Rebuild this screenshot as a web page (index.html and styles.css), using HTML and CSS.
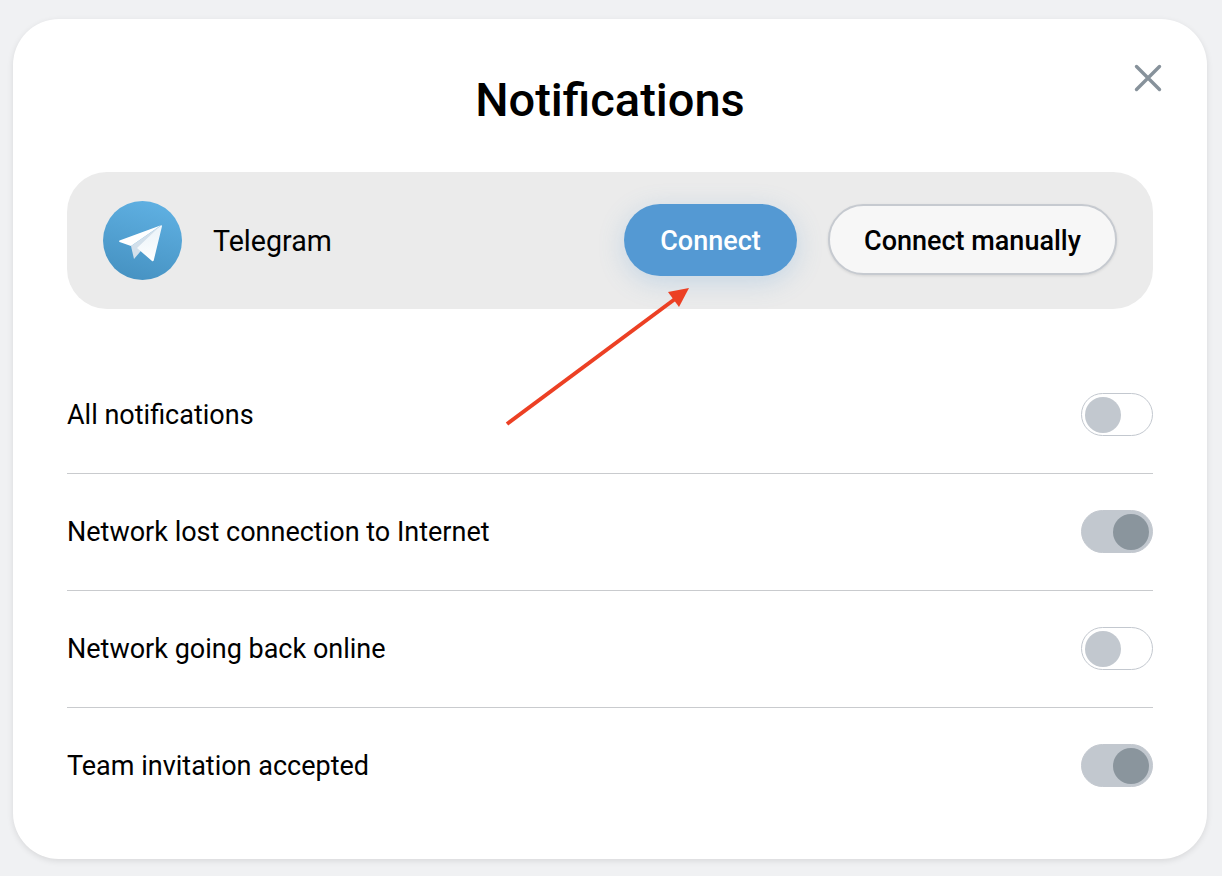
FILE: index.html
```html
<!DOCTYPE html>
<html lang="en">
<head>
    <meta charset="UTF-8">
    <meta name="viewport" content="width=device-width, initial-scale=1.0">
    <title>Notifications</title>
    <link rel="stylesheet" href="styles.css">
</head>
<body>
    <div class="modal">
        <button class="close" aria-label="Close">
            <svg width="28" height="28" viewBox="0 0 28 28"><path d="M2.500 2.500L25.500 25.500M25.500 2.500L2.500 25.500" stroke="#87929b" stroke-width="3.4" stroke-linecap="round" fill="none"/></svg>
        </button>
        <h1 class="title">Notifications</h1>

        <div class="telegram">
            <svg class="telegram-logo" width="79" height="79" viewBox="0 0 79 79">
                <defs>
                    <linearGradient id="tgBg" x1="0.65" y1="0" x2="0.35" y2="1">
                        <stop offset="0" stop-color="#5fb0e2"/>
                        <stop offset="1" stop-color="#4692c2"/>
                    </linearGradient>
                    <linearGradient id="tgWing" x1="0.6" y1="0.2" x2="0.7" y2="1">
                        <stop offset="0" stop-color="#eef5fa"/>
                        <stop offset="1" stop-color="#ffffff"/>
                    </linearGradient>
                </defs>
                <circle cx="39.500" cy="39.500" r="39.500" fill="url(#tgBg)"/>
                <path d="M57 25L28 45L31 58L37 51Z" fill="#d3e0eb"/>
                <path d="M58 24.300L16.500 39.600C16 40 16 40.800 16.600 41L28 45Z" fill="#ffffff"/>
                <path d="M58 24.300C58.700 24 59.200 24.600 59 25.200L50.700 59.500C50.500 60.300 49.700 60.500 49 60L34 47Z" fill="url(#tgWing)"/>
            </svg>
            <span class="telegram-name">Telegram</span>
            <button class="btn btn-primary">Connect</button>
            <button class="btn btn-secondary">Connect manually</button>
        </div>

        <div class="settings">
            <div class="row">
                <span class="row-label">All notifications</span>
                <div class="toggle"></div>
            </div>
            <div class="row">
                <span class="row-label">Network lost connection to Internet</span>
                <div class="toggle on"></div>
            </div>
            <div class="row">
                <span class="row-label">Network going back online</span>
                <div class="toggle"></div>
            </div>
            <div class="row">
                <span class="row-label">Team invitation accepted</span>
                <div class="toggle on"></div>
            </div>
        </div>

        <!-- annotation on top of the screenshot -->
        <svg class="arrow" width="200" height="160" viewBox="0 0 200 160">
            <path d="M4 150L172 25" stroke="#ec4024" stroke-width="4" fill="none"/>
            <path d="M186 14L165 18L176 33Z" fill="#ec4024"/>
        </svg>
    </div>
</body>
</html>
```

FILE: styles.css
```css
* {
    box-sizing: border-box;
}
body {
    font-family: 'Roboto', sans-serif;
    background-color: #f0f1f3;
    color: #000000;
    margin: 0;
    padding: 19px 15px 17px 13px;
    height: 876px;
    overflow: hidden;
}
.modal {
    position: relative;
    height: 840px;
    background: #ffffff;
    border-radius: 46px;
    box-shadow: 0px 2px 6px rgba(0, 0, 0, 0.1);
    padding: 49px 54px 0;
}
.close {
    position: absolute;
    top: 45px;
    right: 45px;
    padding: 0;
    border: none;
    background: none;
    display: flex;
}
.title {
    margin: 0;
    font-size: 47px;
    line-height: 64px;
    font-weight: 500;
    text-align: center;
}
.telegram {
    margin-top: 40px;
    height: 137px;
    background: #ebebeb;
    border-radius: 40px;
    padding: 0 36px;
    display: flex;
    align-items: center;
}
.telegram-name {
    margin-left: 31px;
    margin-right: auto;
    font-size: 28.6px;
}
.btn {
    height: 72px;
    margin-bottom: 2px;
    padding: 2px 0 0;
    border-radius: 36px;
    font-family: inherit;
    font-size: 27px;
    font-weight: 500;
}
.btn-primary {
    width: 173px;
    background: #5499d3;
    color: #ffffff;
    border: none;
    box-shadow: 0px 6px 26px rgba(84, 153, 211, 0.25);
}
.btn-secondary {
    width: 289px;
    height: 71px;
    margin-left: 31px;
    background: #f7f7f7;
    color: #000000;
    border: 2px solid #c6cad0;
    box-shadow: 0px 1px 3px rgba(0, 0, 0, 0.1);
}
.settings {
    margin-top: 48px;
}
.row {
    height: 117px;
    padding-bottom: 2px;
    display: flex;
    align-items: center;
    justify-content: space-between;
    font-size: 27px;
    border-bottom: 1px solid #c9cbce;
}
.row:last-child {
    border-bottom-color: transparent;
}
.row-label {
    padding-top: 2px;
}
.toggle {
    width: 72px;
    height: 43px;
    border-radius: 22px;
    border: 1px solid #c3c8cf;
    background: #ffffff;
    padding: 3px;
    display: flex;
    justify-content: flex-start;
}
.toggle::after {
    content: "";
    width: 36px;
    height: 36px;
    border-radius: 50%;
    background: #c2c8cf;
}
.toggle.on {
    background: #c2c8cf;
    justify-content: flex-end;
}
.toggle.on::after {
    background: #8a959d;
}
.arrow {
    position: absolute;
    left: 490px;
    top: 255px;
}
```
